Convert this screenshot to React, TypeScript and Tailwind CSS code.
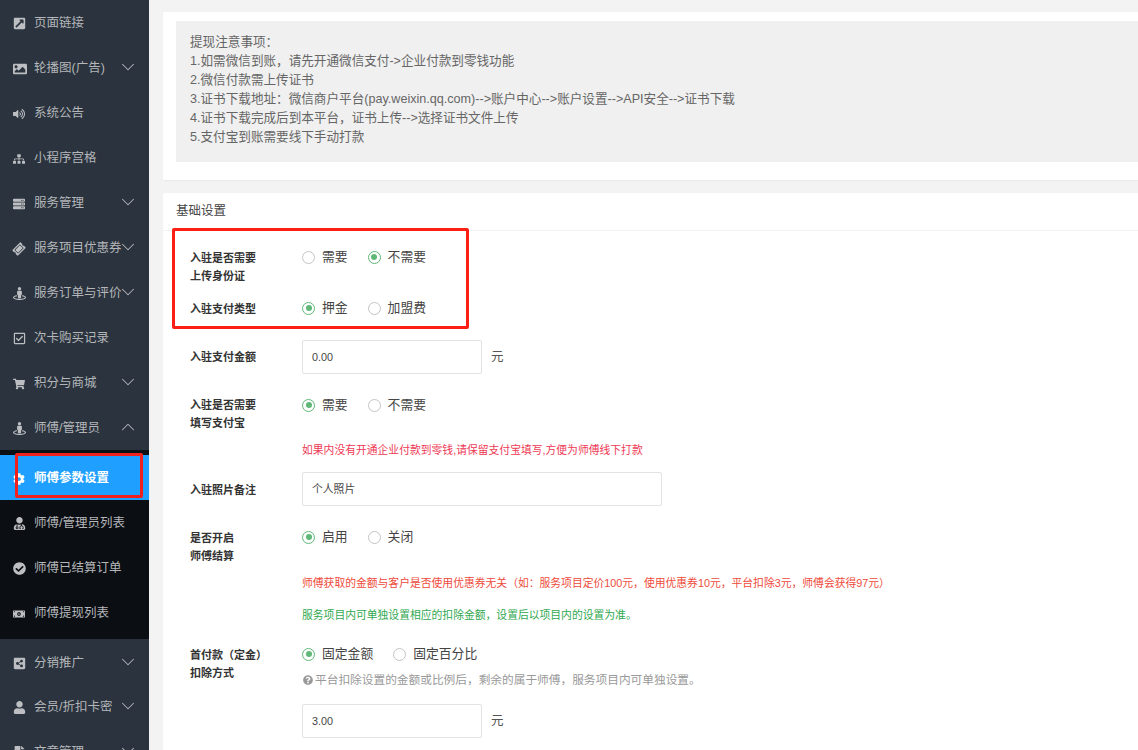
import type { ReactNode } from "react";
import { ChevronDown, ChevronUp } from "lucide-react";
import {
  FaExternalLinkSquareAlt,
  FaImage,
  FaVolumeUp,
  FaSitemap,
  FaServer,
  FaTicketAlt,
  FaStreetView,
  FaRegCheckSquare,
  FaShoppingCart,
  FaCog,
  FaUserMd,
  FaCheckCircle,
  FaMoneyBillAlt,
  FaShareAltSquare,
  FaUser,
  FaFileAlt,
  FaQuestionCircle,
} from "react-icons/fa";

const font = "font-['Liberation_Sans','Noto_Sans_CJK_SC',sans-serif]";

function NavItem({ icon, label, arrow }: { icon: ReactNode; label: string; arrow?: "down" | "up" }) {
  return (
    <div className="h-[45px] flex items-center pl-[13px] pt-[2px] text-[#b4b6b9] text-[12.5px] shrink-0 relative">
      <span className="w-[21px] flex justify-start text-[#bcbec1] text-[13px]">{icon}</span>
      <span className="whitespace-nowrap">{label}</span>
      {arrow === "down" && <ChevronDown size={22} strokeWidth={1.1} className="absolute left-[117px] top-[11px] text-[#b4b6b9]" />}
      {arrow === "up" && <ChevronUp size={22} strokeWidth={1.1} className="absolute left-[117px] top-[11px] text-[#b4b6b9]" />}
    </div>
  );
}

function Radio({ label, checked }: { label: string; checked?: boolean }) {
  return (
    <label className="flex items-center gap-[7px] text-[12.8px] text-[#444]">
      <span className={`w-[13px] h-[13px] rounded-full border flex items-center justify-center bg-white ${checked ? "border-[#5fb878]" : "border-[#c4c4c4]"}`}>
        {checked && <span className="w-[6px] h-[6px] rounded-full bg-[#5fb878]" />}
      </span>
      {label}
    </label>
  );
}

function RadioGroup({ children, className }: { children: ReactNode; className?: string }) {
  return <div className={`flex gap-[20px] h-[20px] ${className ?? "-mt-[2px]"}`}>{children}</div>;
}

function Row({ label, children, className }: { label: ReactNode; children: ReactNode; className?: string }) {
  return (
    <div className={`flex ${className ?? ""}`}>
      <div className="w-[139px] pl-[27px] shrink-0 text-[11px] font-bold text-[#333] leading-[18px]">{label}</div>
      <div className="flex-1">{children}</div>
    </div>
  );
}

function Input({ value, width }: { value: string; width: string }) {
  return (
    <div className={`h-[34px] ${width} border border-[#e3e3e3] rounded-[2px] flex items-center pl-[9px] text-[10.8px] text-[#444] bg-white`}>
      {value}
    </div>
  );
}

export default function App() {
  return (
    <div className={`w-[1138px] h-[750px] overflow-hidden flex bg-[#f3f3f3] relative ${font}`}>
      {/* Sidebar */}
      <aside className="w-[149px] h-[750px] overflow-hidden bg-[#2a333e] flex flex-col shrink-0">
        <NavItem icon={<FaExternalLinkSquareAlt />} label="页面链接" />
        <NavItem icon={<FaImage className="text-[14px]" />} label="轮播图(广告)" arrow="down" />
        <NavItem icon={<FaVolumeUp className="text-[12px]" />} label="系统公告" />
        <NavItem icon={<FaSitemap className="text-[12px]" />} label="小程序宫格" />
        <NavItem icon={<FaServer className="text-[12px]" />} label="服务管理" arrow="down" />
        <NavItem icon={<FaTicketAlt className="-rotate-45 text-[12px]" />} label="服务项目优惠券" arrow="down" />
        <NavItem icon={<FaStreetView />} label="服务订单与评价" arrow="down" />
        <NavItem icon={<FaRegCheckSquare />} label="次卡购买记录" />
        <NavItem icon={<FaShoppingCart className="text-[12px]" />} label="积分与商城" arrow="down" />
        <NavItem icon={<FaStreetView />} label="师傅/管理员" arrow="up" />
        <div className="bg-[#0b0f14] pt-[5px] pb-[4px] mb-px">
          <div className="h-[45px] bg-[#1f9fff] flex items-center pl-[13px] pt-[2px] text-white text-[12.5px] font-bold">
            <span className="w-[21px] text-[12px]"><FaCog /></span>
            师傅参数设置
          </div>
          <NavItem icon={<FaUserMd />} label="师傅/管理员列表" />
          <NavItem icon={<FaCheckCircle />} label="师傅已结算订单" />
          <NavItem icon={<FaMoneyBillAlt className="text-[12px]" />} label="师傅提现列表" />
        </div>
        <NavItem icon={<FaShareAltSquare />} label="分销推广" arrow="down" />
        <div className="-mt-px">
          <NavItem icon={<FaUser />} label="会员/折扣卡密" arrow="down" />
        </div>
        <NavItem icon={<FaFileAlt />} label="文章管理" arrow="down" />
      </aside>

      {/* Main */}
      <main className="flex-1 pl-[14px] pt-[12px] flex flex-col gap-[13px]">
        <section className="bg-white h-[168px] pl-[13px] pt-[9px] shadow-[0_1px_1px_rgba(0,0,0,0.04)] rounded-tl-[2px]">
          <div className="bg-[#f0f0f0] h-[141px] pl-[14px] pt-[12px] text-[12.6px] leading-[19px] text-[#666]">
            <p>提现注意事项：</p>
            <p>1.如需微信到账，请先开通微信支付-&gt;企业付款到零钱功能</p>
            <p>2.微信付款需上传证书</p>
            <p>3.证书下载地址：微信商户平台(pay.weixin.qq.com)--&gt;账户中心--&gt;账户设置--&gt;API安全--&gt;证书下载</p>
            <p>4.证书下载完成后到本平台，证书上传--&gt;选择证书文件上传</p>
            <p>5.支付宝到账需要线下手动打款</p>
          </div>
        </section>

        <section className="bg-white flex-1 rounded-tl-[2px]">
          <div className="h-[38px] pl-[13px] flex items-center text-[12.5px] text-[#444] border-b border-[#f3f3f3]">基础设置</div>

          <Row label={<>入驻是否需要<br />上传身份证</>} className="mt-[18px]">
            <RadioGroup><Radio label="需要" /><Radio label="不需要" checked /></RadioGroup>
          </Row>
          <Row label="入驻支付类型" className="mt-[15px]">
            <RadioGroup><Radio label="押金" checked /><Radio label="加盟费" /></RadioGroup>
          </Row>
          <Row label={<div className="pt-[8px]">入驻支付金额</div>} className="mt-[22px]">
            <div className="flex items-center gap-[9px] text-[12.5px] text-[#555]">
              <Input value="0.00" width="w-[180px]" />元
            </div>
          </Row>
          <Row label={<>入驻是否需要<br />填写支付宝</>} className="mt-[22px]">
            <RadioGroup className="-mt-px"><Radio label="需要" checked /><Radio label="不需要" /></RadioGroup>
            <p className="mt-[27px] text-[10.8px] leading-[16px] text-[#ee3a55] whitespace-nowrap">如果内没有开通企业付款到零钱,请保留支付宝填写,方便为师傅线下打款</p>
          </Row>
          <Row label={<div className="pt-[9px]">入驻照片备注</div>} className="mt-[14px]">
            <Input value="个人照片" width="w-[360px]" />
          </Row>
          <Row label={<>是否开启<br />师傅结算</>} className="mt-[23px]">
            <RadioGroup><Radio label="启用" checked /><Radio label="关闭" /></RadioGroup>
            <p className="mt-[28px] text-[10.8px] leading-[16px] text-[#ee4a3a] whitespace-nowrap">师傅获取的金额与客户是否使用优惠券无关（如：服务项目定价100元，使用优惠券10元，平台扣除3元，师傅会获得97元）</p>
            <p className="mt-[16px] text-[10.8px] leading-[16px] text-[#2fa84f] whitespace-nowrap">服务项目内可单独设置相应的扣除金额，设置后以项目内的设置为准。</p>
          </Row>
          <Row label={<>首付款（定金）<br />扣除方式</>} className="mt-[23px]">
            <RadioGroup><Radio label="固定金额" checked /><Radio label="固定百分比" /></RadioGroup>
            <p className="mt-[8px] flex items-center gap-[2px] text-[11.7px] leading-[16px] text-[#999] whitespace-nowrap">
              <FaQuestionCircle className="text-[10px] text-[#999] ml-px" />平台扣除设置的金额或比例后，剩余的属于师傅，服务项目内可单独设置。
            </p>
            <div className="mt-[16px] flex items-center gap-[9px] text-[12.5px] text-[#555]">
              <Input value="3.00" width="w-[180px]" />元
            </div>
          </Row>
        </section>
      </main>

      {/* red annotation boxes */}
      <div className="absolute left-[172px] top-[228px] w-[297px] h-[101px] border-[3px] border-[#fb1f14] rounded-[2px]" />
      <div className="absolute left-[15px] top-[453px] w-[128px] h-[45px] border-[3px] border-[#f0211c] rounded-[2px]" />
    </div>
  );
}
